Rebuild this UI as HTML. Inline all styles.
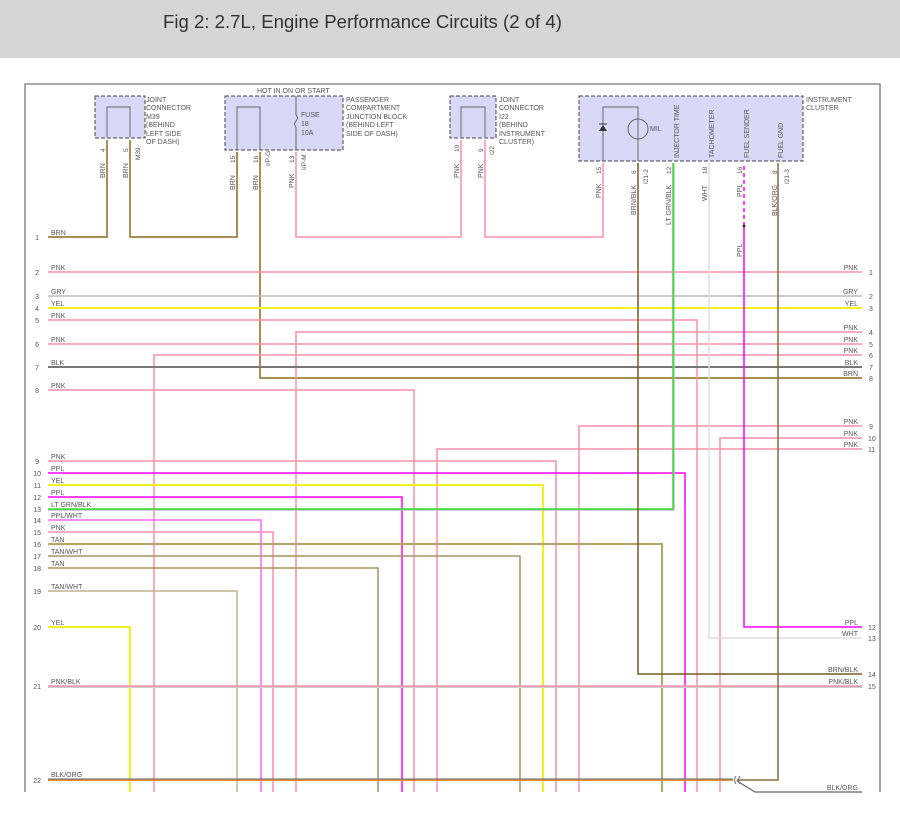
<!DOCTYPE html>
<html><head><meta charset="utf-8"><style>
html,body{margin:0;padding:0;background:#fff;width:900px;height:817px;overflow:hidden}
.t{position:absolute;left:0;top:0;width:900px;height:58px;background:#d6d6d6}
.t span{position:absolute;left:163px;top:11px;font:18.6px "Liberation Sans",sans-serif;color:#333}
svg{position:absolute;left:0;top:0}
text{font-family:"Liberation Sans",sans-serif;fill:#555}
</style></head><body>
<div class="t"><span>Fig 2: 2.7L, Engine Performance Circuits (2 of 4)</span></div>
<svg width="900" height="817" viewBox="0 0 900 817">
<g fill="none" stroke="#777" stroke-width="1.3"><polyline points="25,792 25,84 880,84 880,792"/></g>
<g fill="#d9d9f7" stroke="#444" stroke-width="1" stroke-dasharray="4,2">
<rect x="95" y="96" width="50" height="42"/>
<rect x="225" y="96" width="118" height="54"/>
<rect x="450" y="96" width="46" height="42"/>
<rect x="579" y="96" width="224" height="65"/>
</g>
<g fill="none" stroke="#666" stroke-width="1">
<polyline points="107,137 107,107 130,107 130,137"/>
<polyline points="237,150 237,107 260,107 260,150"/>
<line x1="296" y1="96" x2="296" y2="115"/><path d="M296,115 q3,3 0,6 q-3,3 0,6"/><line x1="296" y1="127" x2="296" y2="150"/>
<polyline points="461,137 461,107 485,107 485,137"/>
<polyline points="603,161 603,107 638,107 638,161"/>
<circle cx="638" cy="129" r="10"/>
</g>
<path d="M599,131 L607,131 L603,125 Z" fill="#333"/><line x1="599" y1="124" x2="607" y2="124" stroke="#333"/>
<g font-size="7" fill="#555">
<text x="146" y="102">JOINT</text><text x="146" y="110">CONNECTOR</text><text x="146" y="119">M39</text><text x="146" y="127">(BEHIND</text><text x="146" y="136">LEFT SIDE</text><text x="146" y="144">OF DASH)</text>
<text x="257" y="93">HOT IN ON OR START</text>
<text x="346" y="102">PASSENGER</text><text x="346" y="110">COMPARTMENT</text><text x="346" y="119">JUNCTION BLOCK</text><text x="346" y="127">(BEHIND LEFT</text><text x="346" y="136">SIDE OF DASH)</text>
<text x="301" y="117">FUSE</text><text x="301" y="126">18</text><text x="301" y="135">10A</text>
<text x="499" y="102">JOINT</text><text x="499" y="110">CONNECTOR</text><text x="499" y="119">I22</text><text x="499" y="127">(BEHIND</text><text x="499" y="136">INSTRUMENT</text><text x="499" y="144">CLUSTER)</text>
<text x="806" y="102">INSTRUMENT</text><text x="806" y="110">CLUSTER</text>
<text x="650" y="131">MIL</text>
<text transform="translate(679,158) rotate(-90)">INJECTOR TIME</text>
<text transform="translate(714,158) rotate(-90)">TACHOMETER</text>
<text transform="translate(749,158) rotate(-90)">FUEL SENDER</text>
<text transform="translate(783,158) rotate(-90)">FUEL GND</text>
</g>
<g font-size="6.5" fill="#555">
<text transform="translate(105,152) rotate(-90)">4</text><text transform="translate(128,152) rotate(-90)">5</text><text transform="translate(140,160) rotate(-90)">M39</text>
<text transform="translate(235,163) rotate(-90)">15</text><text transform="translate(258,163) rotate(-90)">16</text><text transform="translate(270,166) rotate(-90)">I/P-G</text>
<text transform="translate(294,163) rotate(-90)">13</text><text transform="translate(306,170) rotate(-90)">I/P-M</text>
<text transform="translate(459,152) rotate(-90)">10</text><text transform="translate(483,152) rotate(-90)">9</text><text transform="translate(494,155) rotate(-90)">I22</text>
<text transform="translate(601,174) rotate(-90)">15</text><text transform="translate(636,174) rotate(-90)">6</text><text transform="translate(648,184) rotate(-90)">I21-2</text>
<text transform="translate(671,174) rotate(-90)">12</text><text transform="translate(707,174) rotate(-90)">18</text><text transform="translate(742,174) rotate(-90)">16</text><text transform="translate(777,174) rotate(-90)">8</text><text transform="translate(789,184) rotate(-90)">I21-3</text>
</g>
<g font-size="7" fill="#555">
<text transform="translate(105,178) rotate(-90)">BRN</text><text transform="translate(128,178) rotate(-90)">BRN</text>
<text transform="translate(235,190) rotate(-90)">BRN</text><text transform="translate(258,190) rotate(-90)">BRN</text><text transform="translate(294,188) rotate(-90)">PNK</text>
<text transform="translate(459,178) rotate(-90)">PNK</text><text transform="translate(483,178) rotate(-90)">PNK</text>
<text transform="translate(601,198) rotate(-90)">PNK</text><text transform="translate(636,215) rotate(-90)">BRN/BLK</text><text transform="translate(671,225) rotate(-90)">LT GRN/BLK</text>
<text transform="translate(707,201) rotate(-90)">WHT</text><text transform="translate(742,197) rotate(-90)">PPL</text><text transform="translate(742,257) rotate(-90)">PPL</text><text transform="translate(777,216) rotate(-90)">BLK/ORG</text>
</g>
<g fill="none" stroke-width="1.5">
<polyline stroke="#8a6a1e" points="48,237 107,237 107,140"/>
<polyline stroke="#8a6a1e" points="130,140 130,237 237,237 237,152"/>
<polyline stroke="#8a6a1e" points="260,152 260,378 862,378"/>
<polyline stroke="#f890a8" points="296,152 296,237 461,237 461,140"/>
<polyline stroke="#f890a8" points="485,140 485,237 603,237 603,163"/>
<line stroke="#f890a8" x1="48" y1="272" x2="862" y2="272"/>
<line stroke="#bbb" x1="48" y1="296" x2="862" y2="296"/>
<line stroke="#f4f020" stroke-width="2" x1="48" y1="308" x2="862" y2="308"/>
<polyline stroke="#f890a8" points="48,320 697,320 697,792"/>
<polyline stroke="#f890a8" points="296,792 296,332 862,332"/>
<line stroke="#f890a8" x1="48" y1="344" x2="862" y2="344"/>
<polyline stroke="#f890a8" points="154,792 154,355 862,355"/>
<line stroke="#777" stroke-width="2" x1="48" y1="367" x2="862" y2="367"/>
<polyline stroke="#f890a8" points="48,390 414,390 414,792"/>
<polyline stroke="#f890a8" points="579,792 579,426 862,426"/>
<polyline stroke="#f890a8" points="720,792 720,438 862,438"/>
<polyline stroke="#f890a8" points="437,792 437,449 862,449"/>
<polyline stroke="#f890a8" points="48,461 556,461 556,792"/>
<polyline stroke="#f0f" points="48,473 685,473 685,792"/>
<polyline stroke="#f4f020" stroke-width="2" points="48,485 543,485 543,792"/>
<polyline stroke="#f0f" points="48,497 402,497 402,792"/>
<polyline stroke="#bbb" points="48,510 674,510 674,163"/>
<polyline stroke="#3d3" points="48,509 673,509 673,163"/>
<polyline stroke="#f6f" points="48,520 261,520 261,792"/>
<polyline stroke="#f890a8" points="48,532 273,532 273,792"/>
<polyline stroke="#b8a468" stroke-width="2" points="48,544 662,544 662,792"/>
<polyline stroke="#a89468" points="48,556 520,556 520,792"/>
<polyline stroke="#a89058" points="48,568 378,568 378,792"/>
<polyline stroke="#c0b090" points="48,591 237,591 237,792"/>
<polyline stroke="#f4f020" stroke-width="2" points="48,627 130,627 130,792"/>
<polyline stroke="#f0f" points="744,163 744,627 862,627"/>
<polyline stroke="#ddd" points="709,163 709,638 862,638"/>
<polyline stroke="#7a5a20" points="638,163 638,674 862,674"/>
<line stroke="#ccc" stroke-width="2" x1="48" y1="687" x2="862" y2="687"/>
<line stroke="#f890a8" x1="48" y1="686" x2="862" y2="686"/>
<line stroke="#e8903a" stroke-width="2" x1="48" y1="780" x2="733" y2="780"/>
<line stroke="#666" stroke-width="1" x1="48" y1="779" x2="733" y2="779"/>
<polyline stroke="#8a6a3a" points="737,780 778,780 778,163"/>
<polyline stroke="#666" stroke-width="1.2" points="737,781 755,792 862,792"/>
</g>
<path d="M736,776 q-3,4 0,8 M740,776 q-3,4 0,8" stroke="#666" fill="none"/>
<line x1="744" y1="163" x2="744" y2="225" stroke="#fff" stroke-width="2" stroke-dasharray="3,4"/>
<circle cx="744" cy="226" r="1.5" fill="#333"/>
<g font-size="7" fill="#555">
<text x="51" y="235">BRN</text><text x="51" y="270">PNK</text><text x="51" y="294">GRY</text><text x="51" y="306">YEL</text><text x="51" y="318">PNK</text><text x="51" y="342">PNK</text><text x="51" y="365">BLK</text><text x="51" y="388">PNK</text>
<text x="51" y="459">PNK</text><text x="51" y="471">PPL</text><text x="51" y="483">YEL</text><text x="51" y="495">PPL</text><text x="51" y="507">LT GRN/BLK</text><text x="51" y="518">PPL/WHT</text><text x="51" y="530">PNK</text><text x="51" y="542">TAN</text><text x="51" y="554">TAN/WHT</text><text x="51" y="566">TAN</text><text x="51" y="589">TAN/WHT</text><text x="51" y="625">YEL</text><text x="51" y="684">PNK/BLK</text><text x="51" y="777">BLK/ORG</text>
</g>
<g font-size="7" fill="#666" text-anchor="end">
<text x="39" y="240">1</text><text x="39" y="275">2</text><text x="39" y="299">3</text><text x="39" y="311">4</text><text x="39" y="323">5</text><text x="39" y="347">6</text><text x="39" y="370">7</text><text x="39" y="393">8</text>
<text x="39" y="464">9</text><text x="41" y="476">10</text><text x="41" y="488">11</text><text x="41" y="500">12</text><text x="41" y="512">13</text><text x="41" y="523">14</text><text x="41" y="535">15</text><text x="41" y="547">16</text><text x="41" y="559">17</text><text x="41" y="571">18</text><text x="41" y="594">19</text><text x="41" y="630">20</text><text x="41" y="689">21</text><text x="41" y="783">22</text>
</g>
<g font-size="7" fill="#555" text-anchor="end">
<text x="858" y="270">PNK</text><text x="858" y="294">GRY</text><text x="858" y="306">YEL</text><text x="858" y="330">PNK</text><text x="858" y="342">PNK</text><text x="858" y="353">PNK</text><text x="858" y="365">BLK</text><text x="858" y="376">BRN</text>
<text x="858" y="424">PNK</text><text x="858" y="436">PNK</text><text x="858" y="447">PNK</text><text x="858" y="625">PPL</text><text x="858" y="636">WHT</text><text x="858" y="672">BRN/BLK</text><text x="858" y="684">PNK/BLK</text><text x="858" y="790">BLK/ORG</text>
</g>
<g font-size="7" fill="#666">
<text x="869" y="275">1</text><text x="869" y="299">2</text><text x="869" y="311">3</text><text x="869" y="335">4</text><text x="869" y="347">5</text><text x="869" y="358">6</text><text x="869" y="370">7</text><text x="869" y="381">8</text>
<text x="869" y="429">9</text><text x="868" y="441">10</text><text x="868" y="452">11</text><text x="868" y="630">12</text><text x="868" y="641">13</text><text x="868" y="677">14</text><text x="868" y="689">15</text>
</g>
<rect x="0" y="793" width="900" height="24" fill="#fff"/>
</svg>
</body></html>
